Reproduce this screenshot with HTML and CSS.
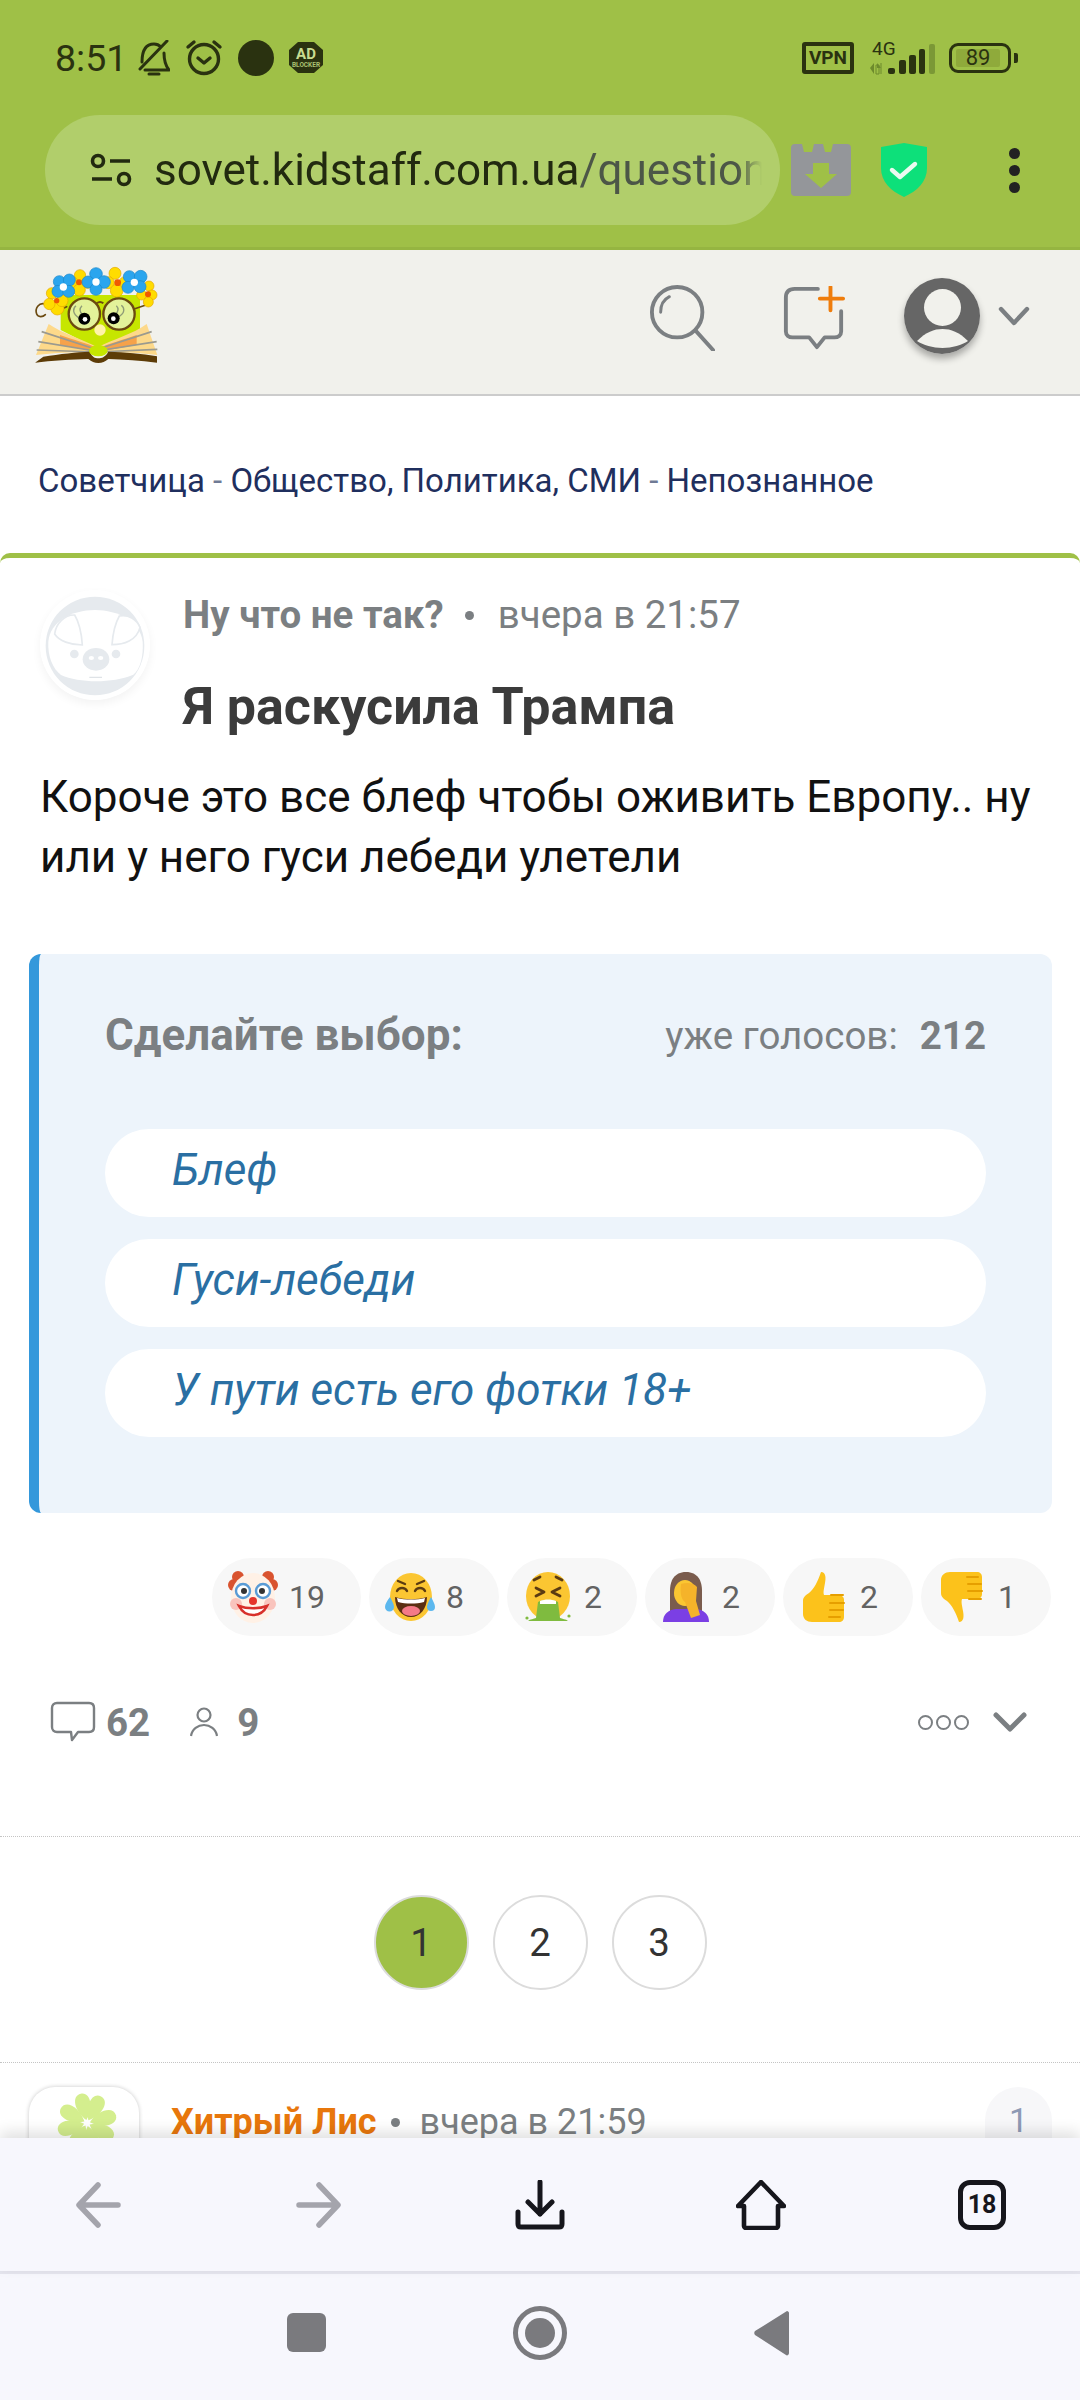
FILE: index.html
```html
<!DOCTYPE html>
<html lang="ru">
<head>
<meta charset="utf-8">
<title>Я раскусила Трампа</title>
<link rel="stylesheet" href="styles.css">
</head>
<body>
<div class="app">
  <div class="topbar">
    <div class="status">
      <span class="time">8:51</span>
      <svg class="st-bell" width="33" height="36" viewBox="0 0 33 36" fill="none" stroke="#2a3210" stroke-width="3" stroke-linecap="round" stroke-linejoin="round"><path d="M5 22C5 14 7 4 17 4c3 0 5 1 7 3M27 13c0 8 1 12 5 17H8M3 29 30 1M12 34h10"/></svg>
      <svg class="st-alarm" width="38" height="37" viewBox="0 0 38 37" fill="none" stroke="#2a3210" stroke-width="3.4" stroke-linecap="round" stroke-linejoin="round"><circle cx="19" cy="20" r="14.5"/><path d="M13 19l6 5 6-5M3 8l6-5M35 8l-6-5"/></svg>
      <span class="st-dot"></span>
      <svg class="st-ad" width="34" height="31" viewBox="0 0 34 31"><path d="M9 0h16l9 8v15l-9 8H9l-9-8V8z" fill="#2a3210"/><text x="17" y="17" class="ad-big">AD</text><text x="17" y="25" class="ad-small">BLOCKER</text></svg>
      <div class="st-right">
        <span class="vpn">VPN</span>
        <svg class="st-signal" width="70" height="34" viewBox="0 0 70 34"><text x="4" y="14" class="sig-text">4G</text><path d="M2 27l4-5v11zM9 22l4 5H9z" fill="#6d8a2c"/><path d="M8 24h3v9H8zM13 22v11" stroke="#6d8a2c" fill="none"/><rect x="20" y="27" width="7" height="6" rx="2" fill="#2a3210"/><rect x="31" y="19" width="7" height="14" rx="2" fill="#2a3210"/><rect x="41" y="14" width="7" height="19" rx="2" fill="#2a3210"/><rect x="51" y="8" width="6" height="25" rx="2" fill="#2a3210"/><rect x="61" y="3" width="6" height="30" rx="2" fill="#7b9836"/></svg>
        <div class="battery"><span class="bat-fill">89</span></div>
        <span class="bat-tip"></span>
      </div>
    </div>
    <div class="addr">
      <div class="pill">
        <svg class="tune" width="42" height="34" viewBox="0 0 42 34" fill="none" stroke="#222a10" stroke-width="3.6"><circle cx="8" cy="8" r="5.5"/><path d="M20 8h20M2 26h20"/><circle cx="34" cy="26" r="5.5"/></svg>
        <div class="url"><span class="url-host">sovet.kidstaff.com.ua</span><span class="url-path">/question</span></div>
      </div>
      <svg class="ico-cal" width="60" height="52" viewBox="0 0 60 52"><path d="M4 0h7l2 8h8l2-8h9l2 8h6l2-8h14a4 4 0 0 1 4 4v44a4 4 0 0 1-4 4H4a4 4 0 0 1-4-4V4a4 4 0 0 1 4-4z" fill="#94969a"/><path d="M22 19h16v11h8L30 44 14 30h8z" fill="#9fc047"/></svg>
      <svg class="ico-shield" width="46" height="54" viewBox="0 0 46 54"><path d="M23 0l23 4v21c0 14-10 23-23 29C10 48 0 39 0 25V4z" fill="#0de07a"/><path d="M11 27l8 7 15-13" fill="none" stroke="#eafaf0" stroke-width="4.4" stroke-linecap="round" stroke-linejoin="round"/></svg>
      <div class="dots"><span></span><span></span><span></span></div>
    </div>
  </div>

  <header class="site-head">
    <svg class="logo" width="134" height="100" viewBox="90 75 402 300">
      <path d="M182 165h238v105l-120 60-118-60z" fill="#c6e600"/>
      <path d="M136 192c-20-6-32 14-26 30 4 10 18 10 26 2M200 200l-25 12" fill="none" stroke="#6b4a10" stroke-width="5" stroke-linecap="round"/>
      <path d="M400 208l40-14" fill="none" stroke="#6b4a10" stroke-width="5"/>
      <g fill="#ffdc00" stroke="#e5a800" stroke-width="2"><circle cx="156" cy="160" r="17"/><circle cx="172" cy="205" r="20"/><circle cx="148" cy="192" r="17"/><circle cx="186" cy="182" r="18"/><circle cx="240" cy="106" r="17"/><circle cx="262" cy="128" r="17"/><circle cx="218" cy="128" r="17"/><circle cx="238" cy="150" r="18"/><circle cx="345" cy="100" r="18"/><circle cx="375" cy="128" r="18"/><circle cx="325" cy="128" r="18"/><circle cx="350" cy="152" r="19"/><circle cx="447" cy="138" r="15"/><circle cx="456" cy="165" r="15"/><circle cx="425" cy="165" r="15"/><circle cx="445" cy="186" r="15"/></g>
      <circle cx="170" cy="182" r="8" fill="#f05a00"/><circle cx="237" cy="127" r="9" fill="#f05a00"/><circle cx="353" cy="128" r="10" fill="#f05a00"/><circle cx="444" cy="163" r="9" fill="#f05a00"/>
      <g fill="#2aa5ee" stroke="#1b86c9" stroke-width="2"><circle cx="178" cy="125" r="18"/><circle cx="208" cy="120" r="18"/><circle cx="174" cy="154" r="18"/><circle cx="206" cy="154" r="18"/><circle cx="288" cy="102" r="19"/><circle cx="312" cy="126" r="19"/><circle cx="264" cy="126" r="18"/><circle cx="288" cy="148" r="18"/><circle cx="388" cy="110" r="18"/><circle cx="422" cy="110" r="19"/><circle cx="384" cy="142" r="18"/><circle cx="420" cy="140" r="18"/></g>
      <circle cx="190" cy="141" r="11" fill="#fff"/><circle cx="288" cy="126" r="11" fill="#fff"/><circle cx="403" cy="127" r="11" fill="#fff"/>
      <circle cx="253" cy="222" r="47" fill="#e3f29a" stroke="#6b4a10" stroke-width="7"/><circle cx="357" cy="222" r="47" fill="#e3f29a" stroke="#6b4a10" stroke-width="7"/>
      <path d="M290 190c6-5 14-5 20 0" fill="none" stroke="#6b4a10" stroke-width="6"/>
      <path d="M238 235c-22-15-20-30-10-38M248 225c-12-12-8-22-2-28M345 225c12-12 10-22 4-28M352 232c25-12 22-28 12-36" fill="none" stroke="#8f9c77" stroke-width="4"/>
      <circle cx="253" cy="236" r="18" fill="#000"/><circle cx="255" cy="238" r="7" fill="#fff"/><circle cx="341" cy="235" r="18" fill="#000"/><circle cx="340" cy="236" r="7" fill="#fff"/>
      <ellipse cx="300" cy="270" rx="17" ry="17" fill="#fff3a8"/>
      <path d="M108 345l38-93c40 28 100 45 146 70v16c-60-4-130 0-184 7z" fill="#fdd98a"/>
      <path d="M472 345l-32-93c-40 30-100 45-146 70v16c60-4 125 0 178 7z" fill="#fdd98a"/>
      <path d="M180 285c40 15 85 25 112 40v10l-112-20zM410 285c-40 15-85 25-112 40v10l112-20z" fill="#f6a24a"/>
      <path d="M125 275l160 52M115 305l170 28M110 330l175 6M455 275l-160 52M470 305l-180 28M472 328l-180 8" stroke="#9b9a8f" stroke-width="5" fill="none"/>
      <path d="M105 368l25-18c50-8 100-14 140-15 5 15 15 20 25 20s22-5 30-20c50 1 100 6 146 14v19c-50-6-100-10-146-11-10 8-18 12-30 12s-20-4-30-12c-50 1-110 5-160 11z" fill="#5d3c07"/>
      <ellipse cx="295" cy="332" rx="28" ry="17" fill="#c6e600"/>
    </svg>
    <div class="head-actions">
      <svg class="ico-search" width="66" height="66" viewBox="0 0 66 68" fill="none" stroke="#7b7f82" stroke-width="4" stroke-linecap="round"><circle cx="28" cy="28" r="26"/><path d="M11 28c0-8 3-13 9-16" stroke-width="3"/><path d="M47 47l18 20"/></svg>
      <svg class="ico-add" width="64" height="64" viewBox="0 0 64 66" fill="none" stroke-linecap="round"><path d="M36 3H12C6 3 3 6 3 12v35c0 4 3 6 7 6h17l8 10 8-10h10c4 0 7-2 7-6V26" stroke="#7b7f82" stroke-width="4" stroke-linejoin="round"/><path d="M49 1v24M38 13h24" stroke="#ef7d0c" stroke-width="4"/></svg>
      <div class="user-avatar">
        <svg width="76" height="76" viewBox="0 0 76 76"><circle cx="38" cy="38" r="38" fill="#666"/><circle cx="38.5" cy="29.5" r="18.5" fill="#f1f1ec"/><path d="M13 63c9-9 17-12 25.500-12S55 54 64 63c-6 4-16 7-25.500 7S19 67 13 63z" fill="#f1f1ec"/></svg>
      </div>
      <svg class="ico-chev" width="32" height="20" viewBox="0 0 32 20" fill="none" stroke="#7b7f82" stroke-width="4.400" stroke-linecap="round" stroke-linejoin="round"><path d="M3 3l13 14L29 3"/></svg>
    </div>
  </header>

  <main class="main">
    <nav class="crumbs"><span>Советчица</span> <i>-</i> <span>Общество, Политика, СМИ</span> <i>-</i> <span>Непознанное</span></nav>
    <article class="post">
      <div class="post-head">
        <svg class="pig" width="110" height="110" viewBox="60 60 330 330">
          <circle cx="225" cy="225" r="165" fill="#fff"/>
          <circle cx="225" cy="228" r="148" fill="#e6eaee"/>
          <path d="M85 215c5-60 70-95 140-95s135 35 143 95c3 60-15 90-30 100-60 25-160 25-215 0-25-20-40-55-38-100z" fill="#fff"/>
          <path d="M104 192c4-32 30-58 60-57 15 25 21 60 23 90-35 0-70-12-83-33zM360 172c-10-24-35-40-62-34-14 25-20 58-22 86 35 0 74-12 84-52z" fill="#fff" stroke="#e6eaee" stroke-width="5"/>
          <circle cx="163" cy="252" r="13" fill="#e6eaee"/><circle cx="288" cy="252" r="13" fill="#e6eaee"/>
          <ellipse cx="228" cy="268" rx="40" ry="34" fill="#e6eaee"/><ellipse cx="214" cy="264" rx="8" ry="6" fill="#fff"/><ellipse cx="242" cy="264" rx="8" ry="6" fill="#fff"/>
          <path d="M208 322h38" stroke="#dfe3e7" stroke-width="4"/>
        </svg>
        <div class="post-meta">
          <div class="meta-line"><b>Ну что не так?</b><i class="bullet"></i><span>вчера в 21:57</span></div>
          <h1>Я раскусила Трампа</h1>
        </div>
      </div>
      <p class="post-body">Короче это все блеф чтобы оживить Европу.. ну или у него гуси лебеди улетели</p>

      <section class="poll">
        <div class="poll-head"><b>Сделайте выбор:</b><span class="votes">уже голосов:<b>212</b></span></div>
        <div class="poll-opts">
          <a class="opt">Блеф</a>
          <a class="opt">Гуси-лебеди</a>
          <a class="opt">У пути есть его фотки 18+</a>
        </div>
      </section>

      <div class="reactions">
        <div class="react wide">
          <svg width="50" height="52" viewBox="0 0 50 52"><circle cx="6" cy="14" r="6" fill="#d9532f"/><circle cx="44" cy="14" r="6" fill="#d9532f"/><circle cx="10" cy="6" r="6" fill="#d9532f"/><circle cx="40" cy="6" r="6" fill="#d9532f"/><ellipse cx="25" cy="27" rx="22" ry="25" fill="#fff1e6"/><circle cx="8" cy="33" r="6" fill="#f9c4bd"/><circle cx="42" cy="33" r="6" fill="#f9c4bd"/><circle cx="15" cy="20" r="7" fill="#fff" stroke="#5a9bd5" stroke-width="2.400"/><circle cx="35" cy="20" r="7" fill="#fff" stroke="#5a9bd5" stroke-width="2.400"/><circle cx="16" cy="20" r="3" fill="#333"/><circle cx="34" cy="20" r="3" fill="#333"/><circle cx="25" cy="30" r="4" fill="#e5352b"/><path d="M11 35c6 12 22 12 28 0-8 3-20 3-28 0z" fill="#fff" stroke="#d8302b" stroke-width="2.600"/></svg>
          <span>19</span>
        </div>
        <div class="react">
          <svg width="50" height="50" viewBox="0 0 50 50"><ellipse cx="26" cy="25" rx="21" ry="24" fill="#fbc632"/><path d="M12 19c2-4 8-4 10 0M30 19c2-4 8-4 10 0M13 9l7 3M39 9l-7 3" fill="none" stroke="#5b3b12" stroke-width="2.400" stroke-linecap="round"/><path d="M10 25c10 3 22 3 32 0 0 12-7 20-16 20S10 37 10 25z" fill="#5b2f12"/><path d="M12 26c8 2 20 2 28 0l-1 4c-8 2-18 2-26 0z" fill="#fff"/><ellipse cx="26" cy="39" rx="9" ry="5" fill="#f47a88"/><path d="M5 25c2 4 4 7 4 10a4.500 4.500 0 0 1-9 0c0-3 2-6 5-10zM46 25c-2 4-4 7-4 10a4 4 0 0 0 8 0c0-3-2-6-4-10z" fill="#5cb8ee"/></svg>
          <span>8</span>
        </div>
        <div class="react">
          <svg width="50" height="50" viewBox="0 0 50 50"><ellipse cx="25" cy="24" rx="22" ry="24" fill="#fbc632"/><path d="M13 16l8 4-8 4M37 16l-8 4 8 4M11 8l6-3M39 8l-6-3" fill="none" stroke="#5b3b12" stroke-width="2.800" stroke-linecap="round" stroke-linejoin="round"/><path d="M15 30c5-3 15-3 20 0l2 16c2 1 6 1 8 3H5c2-2 6-2 8-3z" fill="#7fbb3f"/><path d="M17 29c5-2 11-2 16 0v3H17z" fill="#fff"/><circle cx="4" cy="46" r="1.600" fill="#7fbb3f"/><circle cx="46" cy="44" r="1.600" fill="#7fbb3f"/></svg>
          <span>2</span>
        </div>
        <div class="react">
          <svg width="50" height="50" viewBox="0 0 50 50"><path d="M25 0C13 0 9 9 9 19v22h32V19C41 9 37 0 25 0z" fill="#7a5c4d"/><ellipse cx="24" cy="21" rx="11" ry="13" fill="#fbc632"/><path d="M2 50c0-8 5-12 13-13l20 0c8 1 13 5 13 13z" fill="#7b3fe4"/><path d="M20 12c6-2 13-1 16 3l-1 14 4 14-9 3-6-16c-4-3-5-9-4-18z" fill="#f5b32a"/></svg>
          <span>2</span>
        </div>
        <div class="react">
          <svg width="50" height="50" viewBox="0 0 50 50"><path d="M22 0c5 0 5 6 4 11-1 6-2 9-1 12h14c4 0 6 2 6 5v17c0 3-2 5-5 5H13c-5 0-9-3-9-8V29c0-4 3-6 6-8 5-4 9-12 12-21z" fill="#fcc21b"/><path d="M32 23h12M31 31h14M31 38h13M30 45h11" stroke="#e69f00" stroke-width="2" stroke-linecap="round"/></svg>
          <span>2</span>
        </div>
        <div class="react">
          <svg width="50" height="50" viewBox="0 0 50 50"><path d="M28 50c-5 0-5-6-4-11 1-6 2-9 1-12H11c-4 0-6-2-6-5V5c0-3 2-5 5-5h27c5 0 9 3 9 8v13c0 4-3 6-6 8-5 4-9 12-12 21z" fill="#fcc21b" transform="translate(50 0) scale(-1 1)"/><path d="M18 27H6M19 19H5M19 12H6M20 5h-11" stroke="#e69f00" stroke-width="2" stroke-linecap="round" transform="translate(50 0) scale(-1 1)"/></svg>
          <span>1</span>
        </div>
      </div>

      <div class="post-foot">
        <svg class="ico-cm" width="46" height="42" viewBox="0 0 46 42" fill="none" stroke="#7b7f82" stroke-width="2.400" stroke-linejoin="round"><path d="M7 2h32c3 0 5 2 5 5v19c0 3-2 5-5 5H28l-6 8-1-8H7c-3 0-5-2-5-5V7c0-3 2-5 5-5z"/></svg>
        <b class="num">62</b>
        <svg class="ico-us" width="28" height="30" viewBox="0 0 28 30" fill="none" stroke="#7b7f82" stroke-width="2.200"><circle cx="14" cy="8" r="6.500"/><path d="M1 29c1-7 7-11 13-11s12 4 13 11"/></svg>
        <b class="num">9</b>
        <div class="foot-right">
          <span class="ring"></span><span class="ring"></span><span class="ring"></span>
          <svg class="foot-chev" width="34" height="20" viewBox="0 0 34 20" fill="none" stroke="#7b7f82" stroke-width="5" stroke-linecap="round" stroke-linejoin="round"><path d="M3 3l14 14L31 3"/></svg>
        </div>
      </div>
    </article>

    <div class="pager">
      <span class="page current">1</span>
      <span class="page">2</span>
      <span class="page">3</span>
    </div>

    <section class="comment">
      <div class="cm-avatar">
        <svg width="70" height="70" viewBox="-35 -35 70 70"><g fill="#d4ee8e"><path d="M0-3C-10-14-10-30 0-30 10-30 10-14 0-3z" transform="rotate(-12)"/><path d="M0-3C-10-14-10-30 0-30 10-30 10-14 0-3z" transform="rotate(28)"/><path d="M0-3C-10-14-10-30 0-30 10-30 10-14 0-3z" transform="rotate(75)"/><path d="M0-3C-10-14-10-30 0-30 10-30 10-14 0-3z" transform="rotate(120)"/><path d="M0-3C-10-14-10-30 0-30 10-30 10-14 0-3z" transform="rotate(165)"/><path d="M0-3C-10-14-10-30 0-30 10-30 10-14 0-3z" transform="rotate(210)"/><path d="M0-3C-10-14-10-30 0-30 10-30 10-14 0-3z" transform="rotate(255)"/><path d="M0-3C-10-14-10-30 0-30 10-30 10-14 0-3z" transform="rotate(300)"/></g></svg>
      </div>
      <div class="cm-meta"><b>Хитрый Лис</b><i class="bullet"></i><span>вчера в 21:59</span></div>
      <span class="cm-count">1</span>
    </section>
  </main>

  <div class="toolbar">
    <svg width="46" height="46" viewBox="0 0 46 46" fill="none" stroke="#a4a4ac" stroke-width="5.500" stroke-linecap="round" stroke-linejoin="round"><path d="M23 3L4 23l19 20M5 23h38"/></svg>
    <svg width="46" height="46" viewBox="0 0 46 46" fill="none" stroke="#a4a4ac" stroke-width="5.500" stroke-linecap="round" stroke-linejoin="round"><path d="M23 3l19 20-19 20M41 23H3"/></svg>
    <svg width="50" height="50" viewBox="0 0 50 50" fill="none" stroke="#16161c" stroke-width="5" stroke-linecap="round" stroke-linejoin="round"><path d="M25 2v32M13 22l12 12 12-12M3 32v12c0 2 1 3 3 3h38c2 0 3-1 3-3V32"/></svg>
    <svg width="50" height="50" viewBox="0 0 50 50" fill="none" stroke="#16161c" stroke-width="4.600" stroke-linecap="round" stroke-linejoin="round"><path d="M25 2L2 26h6v20c0 1 1 2 2 2h30c1 0 2-1 2-2V26h6z"/></svg>
    <div class="tabs">18</div>
  </div>
  <div class="navbar">
    <span class="nav-square"></span>
    <span class="nav-circle"><span></span></span>
    <svg width="36" height="46" viewBox="0 0 36 46"><path d="M34 1c1 0 2 1 2 2v40c0 2-2 3-3 2L2 25c-1-1-1-3 0-4z" fill="#7a7a7e"/></svg>
  </div>
</div>
</body>
</html>
```
FILE: styles.css
```css
* { box-sizing: border-box; }
html, body { margin: 0; padding: 0; background: #fff; }
body { font-family: Roboto, "Noto Sans", sans-serif; }
.app { width: 1080px; height: 2400px; display: flex; flex-direction: column; overflow: hidden; }

/* browser chrome */
.topbar { height: 250px; background: #9fc047; border-bottom: 3px solid #95b541; flex: none; }
.status { height: 115px; display: flex; align-items: center; padding-left: 55px; color: #2a3210; }
.time { font-size: 37.500px; line-height: 40px; width: 70px; margin-right: 12px; }
.st-bell { margin-right: 15px; }
.st-alarm { margin-right: 15px; }
.st-dot { width: 36px; height: 36px; border-radius: 50%; background: #2a3210; margin-right: 15px; }
.ad-big { font: 700 15px Roboto, sans-serif; fill: #c8dc90; text-anchor: middle; }
.ad-small { font: 700 6.500px Roboto, sans-serif; fill: #a9c070; text-anchor: middle; }
.st-right { margin-left: auto; display: flex; align-items: center; padding-right: 62px; }
.vpn { width: 52px; height: 32px; border: 4px solid #2a3210; border-radius: 3px; font-size: 19px; line-height: 24px; font-weight: 700; text-align: center; margin-right: 14px; }
.st-signal { margin-right: 11px; }
.sig-text { font: 400 19px Roboto, sans-serif; fill: #2a3210; }
.battery { width: 62px; height: 30px; border: 3.500px solid #2a3210; border-radius: 9px; padding: 3px 8px 3px 4px; }
.bat-fill { display: block; height: 18px; background: #8faa3b; border-radius: 2px; font-size: 22px; line-height: 18px; text-align: center; }
.bat-tip { width: 4px; height: 10px; background: #2a3210; margin-left: 3px; border-radius: 0 2px 2px 0; }

.addr { display: flex; align-items: center; height: 110px; padding-left: 45px; }
.pill { width: 735px; height: 110px; border-radius: 55px; background: #b1ce6b; display: flex; align-items: center; padding-left: 45px; margin-right: 11px; }
.tune { flex: none; margin-right: 22px; }
.url { width: 608px; overflow: hidden; white-space: nowrap; font-size: 44px; line-height: 56px; -webkit-mask-image: linear-gradient(to right, #000 96%, transparent); mask-image: linear-gradient(to right, #000 96%, transparent); }
.url-host { color: #222a10; }
.url-path { color: #4c5647; }
.ico-cal { margin-right: 30px; }
.ico-shield { flex: none; }
.dots { margin-left: 82px; display: flex; flex-direction: column; gap: 6px; }
.dots span { width: 11px; height: 11px; border-radius: 50%; background: #222; }

/* site header */
.site-head { flex: none; height: 146px; background: #f1f1ec; border-bottom: 2px solid #cccccc; display: flex; align-items: flex-start; padding-left: 30px; }
.logo { margin-top: 15px; flex: none; }
.head-actions { margin-left: auto; display: flex; align-items: flex-start; padding-right: 50px; }
.ico-search { margin-top: 35px; margin-right: 67px; }
.ico-add { margin-top: 36px; margin-right: 58px; }
.user-avatar { width: 76px; height: 76px; margin-top: 28px; border-radius: 50%; box-shadow: 0 5px 7px rgba(0,0,0,.3); margin-right: 18px; }
.user-avatar svg { display: block; }
.ico-chev { margin-top: 56px; }

/* main */
.main { flex: 1; min-height: 0; overflow: hidden; background: #fff; }
.crumbs { height: 157px; padding: 65px 38px 0; font-size: 33px; line-height: 40px; color: #1f2f5e; white-space: nowrap; }
.crumbs i { font-style: normal; color: #6f7a95; }

.post { border-top: 5px solid #9fc047; border-radius: 10px 10px 0 0; height: 1284px; border-bottom: 1px dotted #c4c4c4; }
.post-head { display: flex; padding: 32px 0 0 40px; }
.pig { flex: none; border-radius: 50%; box-shadow: 0 4px 10px rgba(0,0,0,.05); }
.post-meta { margin-left: 33px; }
.meta-line { display: flex; align-items: center; font-size: 38.500px; line-height: 44px; color: #7b7f82; height: 44px; margin-top: 3px; }
.meta-line b { font-weight: 700; }
.meta-line .bullet { margin: 0 24px 0 21px; }
.bullet { width: 9px; height: 9px; border-radius: 50%; background: #7b7f82; flex: none; }
.post-meta h1 { margin: 40px 0 0; font-size: 52px; line-height: 60px; font-weight: 700; color: #3b3b3b; }
.post-body { margin: 30px 40px 0; font-size: 44px; line-height: 60px; color: #111; }

.poll { margin: 67px 28px 0 29px; height: 559px; background: #edf4fb; border-left: 10px solid #3498db; border-radius: 12px; padding: 53px 66px 0; }
.poll-head { display: flex; justify-content: space-between; align-items: center; height: 56px; color: #7b7f82; font-size: 44px; }
.votes { font-size: 38.500px; }
.votes b { margin-left: 22px; }
.poll-opts { display: flex; flex-direction: column; gap: 22px; margin-top: 66px; }
.opt { height: 88px; border-radius: 44px; background: #fff; padding-left: 67px; font-size: 44px; line-height: 82px; font-style: italic; color: #2a6fa3; }

.reactions { display: flex; justify-content: flex-end; gap: 8px; margin: 45px 29px 0 0; }
.react { width: 130px; height: 78px; border-radius: 39px; background: #f7f7f7; display: flex; align-items: center; padding-left: 16px; gap: 11px; font-size: 32px; color: #636363; }
.react.wide { width: 149px; }
.react svg { flex: none; }

.post-foot { display: flex; align-items: center; height: 60px; margin-top: 56px; padding: 0 53px 0 50px; color: #7b7f82; }
.num { font-size: 38.500px; font-weight: 700; }
.ico-cm { margin-right: 10px; }
.ico-us { margin: 0 19px 0 40px; }
.foot-right { margin-left: auto; display: flex; align-items: center; gap: 3px; }
.ring { width: 15px; height: 15px; border: 2.600px solid #7b7f82; border-radius: 50%; }
.foot-chev { margin-left: 21px; }

.pager { height: 226px; display: flex; justify-content: center; gap: 24px; padding: 58px 0 0 0; border-bottom: 1px dotted #c4c4c4; }
.page { width: 95px; height: 95px; border-radius: 50%; border: 2px solid #dcdcdc; text-align: center; font-size: 38.500px; line-height: 91px; color: #333; }
.page.current { background: #9fc047; }

.comment { display: flex; align-items: flex-start; padding: 24px 28px 0 29px; }
.cm-avatar { width: 110px; height: 110px; border-radius: 26px; background: #fff; box-shadow: 0 0 4px rgba(0,0,0,.22); padding: 1px 0 0 23px; flex: none; }
.cm-avatar svg { display: block; }
.cm-meta { display: flex; align-items: center; margin: 10px 0 0 32px; font-size: 36px; line-height: 50px; color: #7b7f82; }
.cm-meta b { color: #e8770c; font-weight: 700; }
.cm-meta .bullet { margin: 0 20px 0 14px; }
.cm-count { margin-left: auto; width: 67px; height: 100px; border-radius: 34px; background: #f7f7f9; text-align: center; font-size: 34px; line-height: 66px; color: #8e9ab5; }

/* bottom */
.toolbar { flex: none; height: 133px; background: #f7f7fd; display: grid; grid-template-columns: repeat(5, 221px); justify-content: center; place-items: center; box-shadow: 0 -6px 14px rgba(0,0,0,.12); position: relative; }
.toolbar svg { display: block; }
.tabs { width: 48px; height: 50px; border: 5px solid #16161c; border-radius: 12px; font-size: 25px; font-weight: 700; line-height: 40px; text-align: center; color: #16161c; }
.navbar { flex: none; height: 129px; background: #f7f7fd; border-top: 3px solid #e5e5ee; display: flex; align-items: center; justify-content: center; padding: 0 4px 9px 0; }
.nav-square { width: 39px; height: 39px; background: #7a7a7e; border-radius: 6px; margin-right: 187px; }
.nav-circle { width: 54px; height: 54px; border: 5px solid #7a7a7e; border-radius: 50%; display: flex; align-items: center; justify-content: center; margin-right: 186px; }
.nav-circle span { width: 30px; height: 30px; border-radius: 50%; background: #7a7a7e; }
```
